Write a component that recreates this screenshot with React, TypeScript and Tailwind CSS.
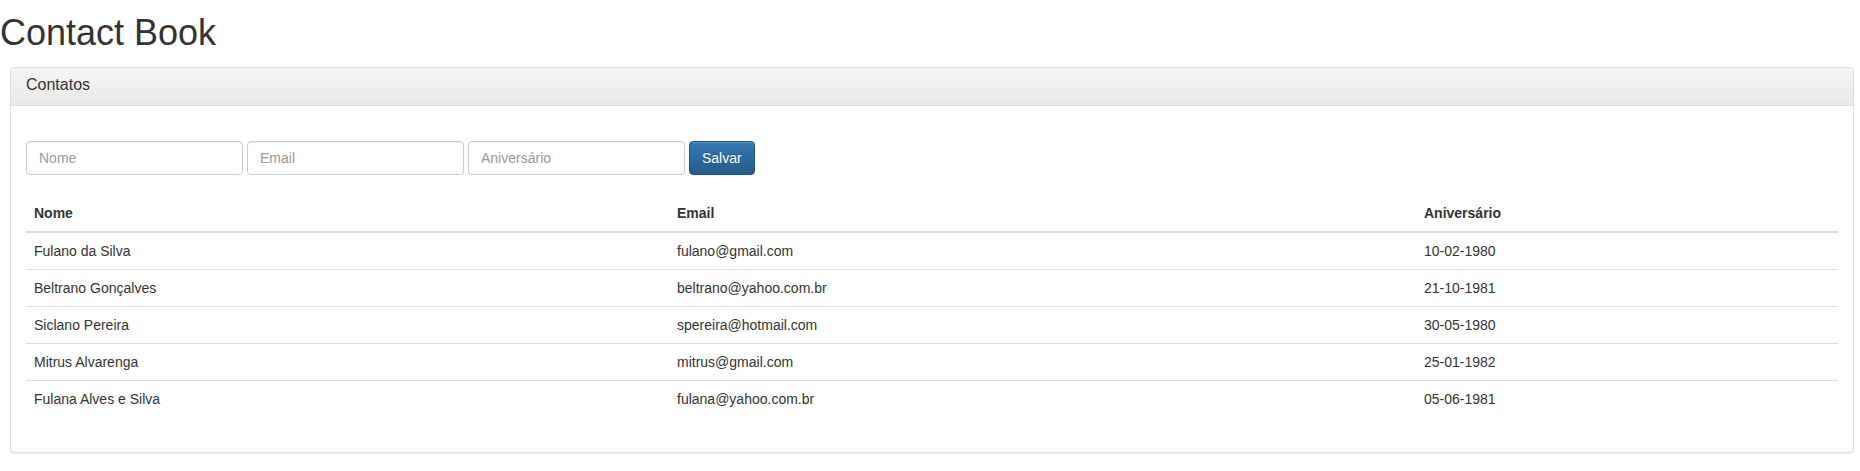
import React from "react";

const rows = [
  ["Fulano da Silva", "fulano@gmail.com", "10-02-1980"],
  ["Beltrano Gonçalves", "beltrano@yahoo.com.br", "21-10-1981"],
  ["Siclano Pereira", "spereira@hotmail.com", "30-05-1980"],
  ["Mitrus Alvarenga", "mitrus@gmail.com", "25-01-1982"],
  ["Fulana Alves e Silva", "fulana@yahoo.com.br", "05-06-1981"],
];

export default function App() {
  return (
    <div className="w-[1860px] min-h-[471px] bg-white font-['Liberation_Sans',Arial,sans-serif] text-[14px] leading-[20px] text-[#333]">
      <h1 className="pt-[13px] mb-[14px] text-[36px] leading-[39.6px] font-normal">Contact Book</h1>
      <div className="ml-[10px] w-[1844px] rounded-[4px] border border-[#ddd] bg-white shadow-[0_1px_1px_rgba(0,0,0,0.05)]">
        <div className="rounded-t-[3px] border-b border-[#ddd] bg-[linear-gradient(to_bottom,#f5f5f5,#e8e8e8)] px-[15px] pt-[8px] pb-[12px]">
          <h3 className="text-[16px] leading-[17.6px] font-normal text-[#333]">Contatos</h3>
        </div>
        <div className="p-[15px]">
          <form className="mt-[20px] flex gap-[4px]" onSubmit={(e) => e.preventDefault()}>
            {["Nome", "Email", "Aniversário"].map((p) => (
              <input
                key={p}
                placeholder={p}
                className="h-[34px] w-[217px] rounded-[4px] border border-[#ccc] bg-white px-[12px] py-[6px] text-[14px] text-[#555] shadow-[inset_0_1px_1px_rgba(0,0,0,0.075)] outline-none placeholder:text-[#999]"
              />
            ))}
            <button
              type="submit"
              className="h-[34px] rounded-[4px] border border-[#245580] bg-[linear-gradient(to_bottom,#337ab7,#265a88)] px-[12px] py-[6px] text-[14px] leading-[20px] text-white [text-shadow:0_-1px_0_rgba(0,0,0,0.2)] shadow-[inset_0_1px_0_rgba(255,255,255,0.15),0_1px_1px_rgba(0,0,0,0.075)]"
            >
              Salvar
            </button>
          </form>
          <div className="mt-[20px] mb-[20px] w-full">
            <div className="grid grid-cols-[643px_747px_1fr] border-b-2 border-[#ddd] font-bold">
              <div className="p-[8px]">Nome</div>
              <div className="p-[8px]">Email</div>
              <div className="p-[8px]">Aniversário</div>
            </div>
            {rows.map((r, i) => (
              <div
                key={r[0]}
                className={
                  i === 0
                    ? "grid grid-cols-[643px_747px_1fr]"
                    : "grid grid-cols-[643px_747px_1fr] border-t border-[#ddd]"
                }
              >
                <div className="p-[8px]">{r[0]}</div>
                <div className="p-[8px]">{r[1]}</div>
                <div className="p-[8px]">{r[2]}</div>
              </div>
            ))}
          </div>
        </div>
      </div>
    </div>
  );
}
